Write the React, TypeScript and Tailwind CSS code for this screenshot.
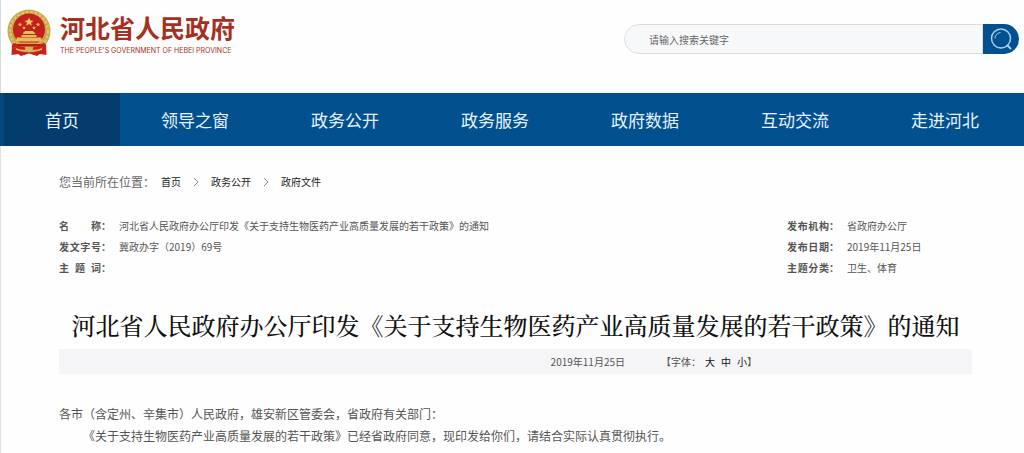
import React, { FormEvent, useState } from "react";

type NavItem = {
  label: string;
  active?: boolean;
};

const navItems: NavItem[] = [
  { label: "首页", active: true },
  { label: "领导之窗" },
  { label: "政务公开" },
  { label: "政务服务" },
  { label: "政府数据" },
  { label: "互动交流" },
  { label: "走进河北" },
];

const crumbs = ["首页", "政务公开", "政府文件"];

const leftMeta = [
  { label: "名 称", value: "河北省人民政府办公厅印发《关于支持生物医药产业高质量发展的若干政策》的通知" },
  { label: "发文字号", value: "冀政办字（2019）69号" },
  { label: "主 题 词", value: "" },
];

const rightMeta = [
  { label: "发布机构", value: "省政府办公厅" },
  { label: "发布日期", value: "2019年11月25日" },
  { label: "主题分类", value: "卫生、体育" },
];

const fontSizes = ["大", "中", "小"];

const Emblem = () => (
  <svg viewBox="0 0 44 48" className="h-12 w-11 shrink-0" aria-hidden="true">
    <path d="M5 34 L4.500 46 L11 45 L14 47 L22 44.500 L30 47 L33 45 L39.500 46 L39 34 Z" fill="#c9201c" />
    <circle cx="22" cy="22" r="21.500" fill="#c7a648" />
    <circle cx="22" cy="22" r="19" fill="none" stroke="#dcc570" strokeWidth="2.500" strokeDasharray="3 1.500" />
    <circle cx="22" cy="20.500" r="16" fill="#c4201d" />
    {/* stars */}
    <path
      d="M22 8.500l1.300 3 3.200.200-2.500 2 .800 3.100-2.800-1.700-2.800 1.700.8-3.100-2.500-2 3.200-.2z"
      fill="#f0ca66"
    />
    <g fill="#ecc05c">
      <path d="M13 13.500l.7 1.300 1.500.1-1.100 1 .3 1.500-1.400-.8-1.300.8.3-1.500-1.100-1 1.500-.1z" />
      <path d="M31 13.500l.7 1.300 1.500.1-1.100 1 .3 1.500-1.400-.8-1.300.8.3-1.500-1.100-1 1.500-.1z" />
      <path d="M17 17l.6 1.200 1.300.1-1 .9.300 1.300-1.200-.7-1.200.7.3-1.300-1-.9 1.300-.1z" />
      <path d="M27 17l.6 1.200 1.300.1-1 .9.300 1.300-1.200-.7-1.200.7.3-1.300-1-.9 1.300-.1z" />
    </g>
    {/* gate */}
    <path d="M16 24l2-2h8l2 2v1H16zM14.500 26h15v2h-15zM10 28.500h24l1.500 4H8.500z" fill="#e6bd5b" />
    <path d="M8 34h28l-3 4H11z" fill="#b31c19" />
    <path d="M9 33.500h26v1.500H9z" fill="#d8a94b" />
    {/* gear and ribbon */}
    <path d="M12 37.500h20l-3 4H15z" fill="#d6b557" />
    <path d="M6 35c5 4 9 5 12 4M38 35c-5 4-9 5-12 4" fill="none" stroke="#c9201c" strokeWidth="3" />
    <path d="M9 40c4 2 7 2 10 2M35 40c-4 2-7 2-10 2" fill="none" stroke="#d9b75a" strokeWidth="1.500" />
  </svg>
);

const SearchIcon = () => (
  <svg viewBox="0 0 24 24" className="h-6 w-6" fill="none" stroke="#9fd0f5" aria-hidden="true">
    <circle cx="12" cy="11.500" r="9.500" strokeWidth="1.500" />
    <path d="M18.500 18.500l3 3" strokeWidth="2" strokeLinecap="round" />
    <path d="M6 11.500a6 6 0 0 1 5.500-6" strokeWidth="1" />
  </svg>
);

const SearchForm = () => {
  const [keyword, setKeyword] = useState("");

  const handleSearch = (e: FormEvent) => {
    e.preventDefault();
  };

  return (
    <form onSubmit={handleSearch} className="flex h-[30px] w-[395px] overflow-hidden rounded-full">
      <input
        type="text"
        aria-label="搜索关键字"
        placeholder="请输入搜索关键字"
        value={keyword}
        onChange={(e) => setKeyword(e.target.value)}
        className="min-w-0 flex-1 rounded-l-full border border-[#dcdcdc] bg-[#f7f8f9] pl-6 text-[10px] text-[#555] placeholder:text-[#666] focus:outline-none"
      />
      <button type="submit" aria-label="搜索" className="flex w-9 items-center justify-center bg-[#03508f]">
        <SearchIcon />
      </button>
    </form>
  );
};

const MetaList = ({ items }: { items: { label: string; value: string }[] }) => (
  <dl className="text-[10px] leading-[21px] text-[#555]">
    {items.map((item) => (
      <div key={item.label} className="flex">
        <dt className="flex w-[60px] shrink-0 font-bold">
          <span className="w-[42px] [text-align-last:justify]">{item.label}</span>：
        </dt>
        <dd>{item.value}</dd>
      </div>
    ))}
  </dl>
);

const App = () => {
  return (
    <div className="bg-[#fefefe] font-['Noto_Sans_CJK_SC',sans-serif]">
      <header className="flex h-[93px] items-start justify-between border-l border-[#d5dbe0] pr-[5px] pl-[6px]">
        <a href="#" className="flex items-start gap-[9px] pt-[9px]">
          <Emblem />
          <span className="flex flex-col pt-[2px] text-[#a5301f]">
            <span className="text-[25px] leading-8 font-bold">河北省人民政府</span>
            <span className="pt-[2px] font-['Inter',sans-serif] text-[7px] leading-3 whitespace-nowrap">
              THE PEOPLE'S GOVERNMENT OF HEBEI PROVINCE
            </span>
          </span>
        </a>
        <div className="pt-6">
          <SearchForm />
        </div>
      </header>

      <nav className="grid grid-cols-[4fr_repeat(6,5fr)] bg-[#03508f] pr-1">
        {navItems.map((item) => (
          <a
            key={item.label}
            href="#"
            className={
              item.active
                ? "border-l-4 border-[#03487f] bg-[#033d6d] text-center text-[17px] leading-[53px] text-[#e6f3fc]"
                : "text-center text-[17px] leading-[53px] text-[#e6f3fc]"
            }
          >
            {item.label}
          </a>
        ))}
      </nav>

      <main className="border-l border-[#e2e2e2] pt-6 pr-[52px] pb-2 pl-[58px]">
        <div className="flex items-center text-[10px] leading-6 text-[#222]">
          <span className="mr-[6px] text-xs leading-6 text-[#666]">您当前所在位置：</span>
          {crumbs.map((crumb, i) => (
            <React.Fragment key={crumb}>
              {i > 0 && (
                <svg viewBox="0 0 6 10" className="mx-3 h-[10px] w-[6px]" fill="none" stroke="#888" aria-hidden="true">
                  <path d="M1 1l4 4-4 4" />
                </svg>
              )}
              <a href="#">{crumb}</a>
            </React.Fragment>
          ))}
        </div>

        <div className="mt-[21px] flex justify-between">
          <MetaList items={leftMeta} />
          <div className="w-[185px] shrink-0">
            <MetaList items={rightMeta} />
          </div>
        </div>

        <h1 className="mt-[27px] text-center font-['Noto_Serif_CJK_SC','Noto_Sans_CJK_SC',serif] text-2xl leading-10 font-medium text-[#111]">
          河北省人民政府办公厅印发《关于支持生物医药产业高质量发展的若干政策》的通知
        </h1>

        <div className="mt-1 grid grid-cols-[7fr_6fr] bg-[#f5f4f6] text-[10px] leading-[25px] text-[#555]">
          <div className="col-start-2 flex gap-9">
            <time dateTime="2019-11-25">2019年11月25日</time>
            <div className="flex">
              <span>【字体：</span>
              <div className="ml-1 flex gap-[6px] text-[#111]">
                {fontSizes.map((size) => (
                  <button key={size} type="button">
                    {size}
                  </button>
                ))}
              </div>
              <span>】</span>
            </div>
          </div>
        </div>

        <article className="mt-[29px] text-xs leading-[22px] text-[#555]">
          <p>各市（含定州、辛集市）人民政府，雄安新区管委会，省政府有关部门：</p>
          <p className="indent-6">
            《关于支持生物医药产业高质量发展的若干政策》已经省政府同意，现印发给你们，请结合实际认真贯彻执行。
          </p>
        </article>
      </main>
    </div>
  );
};

export default App;
